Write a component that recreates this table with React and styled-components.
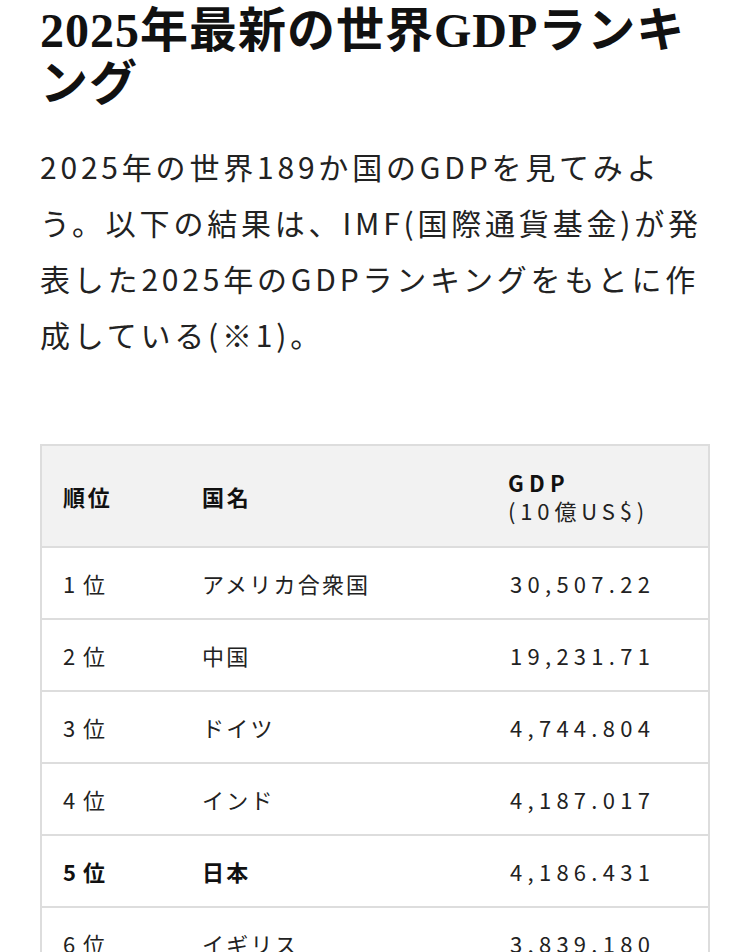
import React from "react";
import styled, { createGlobalStyle } from "styled-components";

const Global = createGlobalStyle`
  html, body { margin: 0; padding: 0; background: #fff; }
  body { font-family: "Noto Sans CJK JP", "Noto Sans", sans-serif; color: #222; }
`;

const Page = styled.main`
  padding: 0 40px;
  width: 670px;
`;

const Title = styled.h1`
  margin: 0;
  padding-top: 4px;
  font-family: "Liberation Serif", "Noto Sans CJK JP", serif;
  font-weight: 700;
  font-size: 48px;
  line-height: 53px;
  letter-spacing: 1px;
  color: #111;
`;

const Lead = styled.p`
  margin: 28px 0 0;
  font-size: 30px;
  line-height: 56px;
  letter-spacing: 3.8px;
  color: #222;
  line-break: strict;
`;

const Table = styled.table`
  margin-top: 82px;
  width: 670px;
  border-collapse: collapse;
  border: 2px solid #ddd;
  table-layout: fixed;
  font-size: 22px;
  color: #222;
`;

const HeadRow = styled.tr`
  background: #f2f2f2;
  height: 102px;
  border-bottom: 2px solid #ddd;
`;

const Row = styled.tr`
  height: 72px;
  border-bottom: 2px solid #ddd;
`;

const Th = styled.th`
  box-sizing: border-box;
  width: ${(p) => p.$w || "auto"};
  padding: 0 0 0 ${(p) => (p.$num ? "19px" : "21px")};
  text-align: left;
  font-weight: 700;
  line-height: 28px;
  letter-spacing: ${(p) => (p.$num ? "0.24em" : "0.12em")};
  color: #111;
`;

const Sub = styled.span`
  display: block;
  font-weight: 400;
  letter-spacing: 0.22em;
  color: #222;
`;

const Td = styled.td`
  padding: 0 0 0 21px;
  font-weight: ${(p) => (p.$strong ? 700 : 400)};
  letter-spacing: ${(p) => (p.$num ? "0.24em" : "0.1em")};
  color: ${(p) => (p.$strong ? "#111" : "#222")};
  white-space: nowrap;
`;

const Digit = styled.span`
  display: inline-block;
  width: 20px;
`;

const rows = [
  ["1", "アメリカ合衆国", "30,507.22"],
  ["2", "中国", "19,231.71"],
  ["3", "ドイツ", "4,744.804"],
  ["4", "インド", "4,187.017"],
  ["5", "日本", "4,186.431", true],
  ["6", "イギリス", "3,839.180"],
  ["7", "フランス", "3,211.292"],
];

export default function App() {
  return (
    <>
      <Global />
      <Page>
        <Title>2025年最新の世界GDPランキング</Title>
        <Lead>
          2025年の世界189か国のGDPを見てみよう。以下の結果は、IMF(国際通貨基金)が発表した2025年のGDPランキングをもとに作成している(※1)。
        </Lead>
        <Table>
          <thead>
            <HeadRow>
              <Th $w="140px">順位</Th>
              <Th $w="308px">国名</Th>
              <Th $num>
                GDP
                <Sub>(10億US$)</Sub>
              </Th>
            </HeadRow>
          </thead>
          <tbody>
            {rows.map(([n, name, v, strong]) => (
              <Row key={n}>
                <Td $strong={strong}>
                  <Digit>{n}</Digit>位
                </Td>
                <Td $strong={strong}>{name}</Td>
                <Td $num>{v}</Td>
              </Row>
            ))}
          </tbody>
        </Table>
      </Page>
    </>
  );
}
